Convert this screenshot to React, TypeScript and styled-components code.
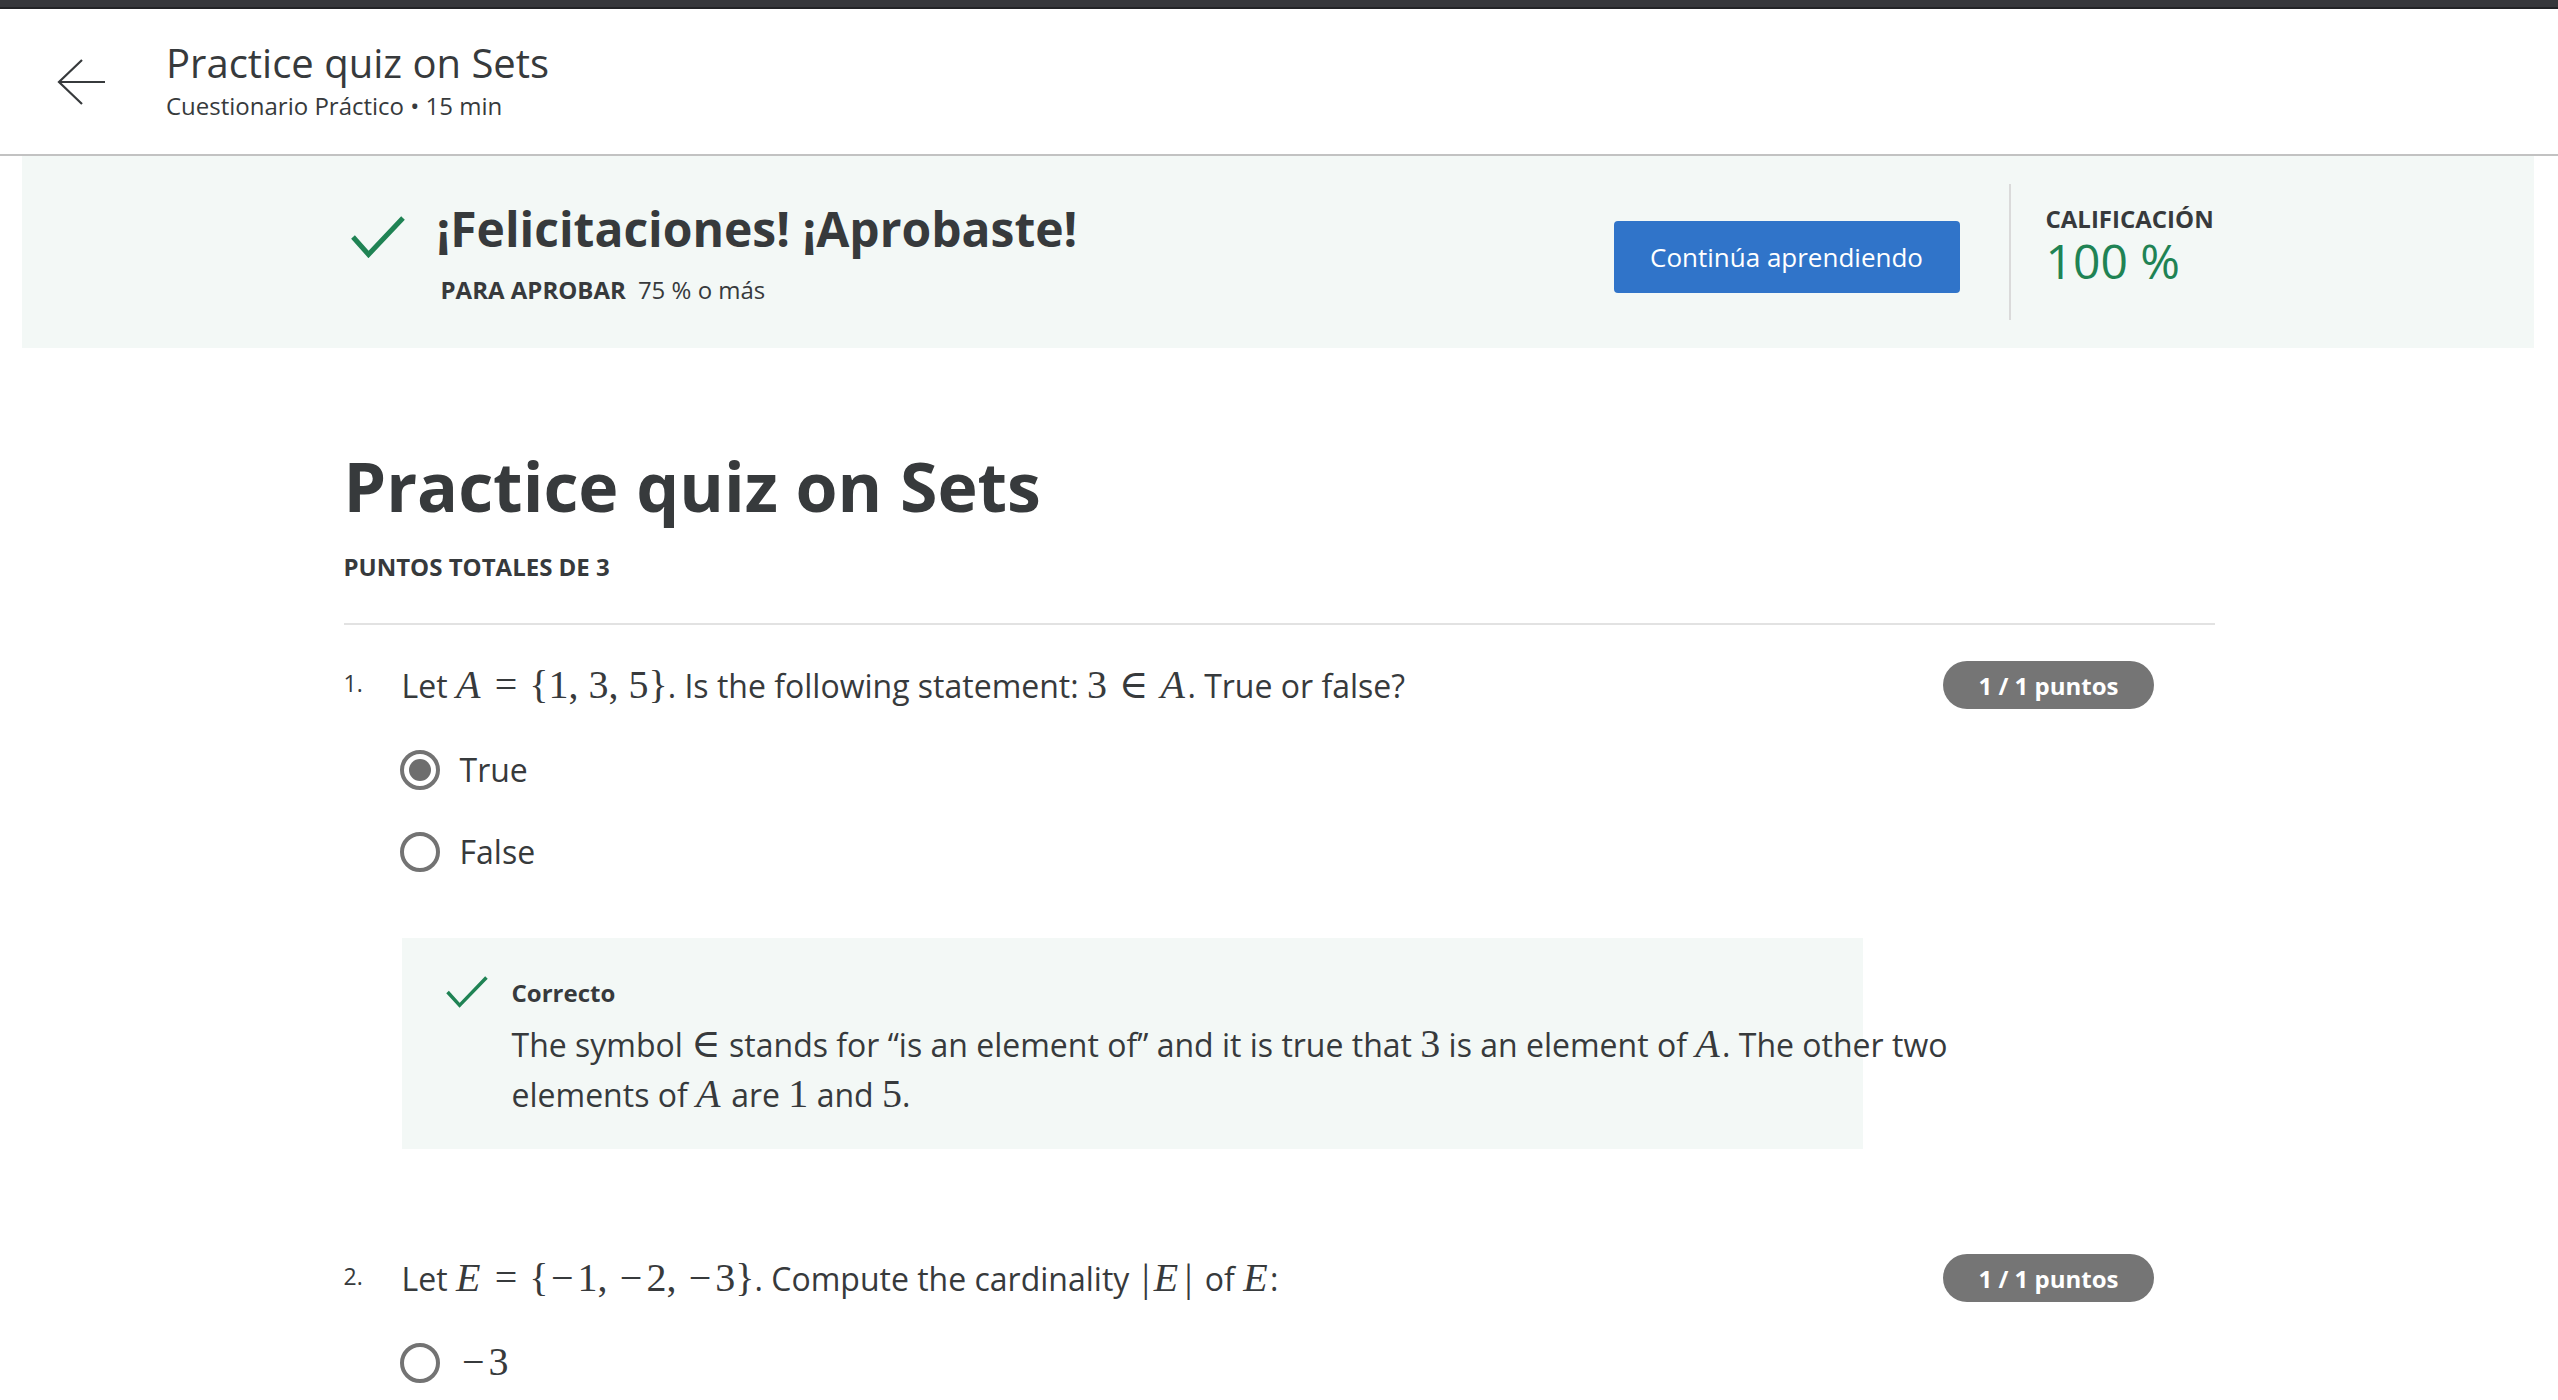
import React from "react";
import styled, { createGlobalStyle } from "styled-components";

const GlobalStyle = createGlobalStyle`
  * { box-sizing: border-box; }
  html, body {
    margin: 0;
    padding: 0;
    background: #ffffff;
    overflow: hidden;
  }
  body {
    font-family: "Open Sans", "Noto Sans", sans-serif;
    color: #373a3c;
  }
`;

const TopBar = styled.div`
  height: 9px;
  background: #36373b;
  border-bottom: 2px solid #222326;
`;

const Header = styled.header`
  height: 147px;
  display: flex;
  align-items: center;
  padding-left: 57px;
  padding-bottom: 3px;
  border-bottom: 2px solid #c2c2c2;
  background: #fff;
`;

const BackButton = styled.button`
  width: 48px;
  height: 46px;
  padding: 0;
  margin-top: 3px;
  border: none;
  background: transparent;
  display: flex;
  align-items: center;
  justify-content: center;
  color: #373a3c;
  cursor: pointer;
`;

const HeaderText = styled.div`
  margin-left: 61px;
  display: flex;
  flex-direction: column;
`;

const HeaderTitle = styled.h1`
  margin: 0;
  font-size: 40px;
  font-weight: 400;
  line-height: 48px;
  color: #373a3c;
`;

const HeaderSub = styled.div`
  margin-top: 4px;
  font-size: 24px;
  line-height: 30px;
  color: #373a3c;
`;

const Banner = styled.section`
  height: 192px;
  margin: 0 24px 0 22px;
  background: #f3f8f6;
`;

const BannerInner = styled.div`
  width: 1871px;
  height: 100%;
  margin: 0 auto;
  padding-left: 8px;
  display: flex;
  align-items: center;
`;

const PassBlock = styled.div`
  flex: 1;
  display: flex;
  align-items: flex-start;
  margin-top: 1px;
`;

const BigCheck = styled.div`
  width: 54px;
  height: 42px;
  margin-top: 15px;
  flex-shrink: 0;
  color: #1f8354;
`;

const PassText = styled.div`
  margin-left: 32px;
`;

const BannerTitle = styled.h2`
  margin: 3px 0 0;
  font-size: 48px;
  font-weight: 700;
  line-height: 50px;
  color: #373a3c;
`;

const PassLine = styled.div`
  margin: 21px 0 0 4px;
  font-size: 24px;
  line-height: 30px;
  display: flex;
  gap: 12px;
`;

const PassLabel = styled.span`
  font-weight: 700;
  text-transform: uppercase;
`;

const PrimaryButton = styled.button`
  width: 346px;
  height: 72px;
  margin-top: 10px;
  border: none;
  border-radius: 4px;
  background: #3074c9;
  color: #ffffff;
  font-family: inherit;
  font-size: 26px;
  font-weight: 400;
  cursor: pointer;
  flex-shrink: 0;
`;

const VDivider = styled.div`
  width: 2px;
  height: 136px;
  background: #dadada;
  margin: 0 35px 0 49px;
  flex-shrink: 0;
`;

const Grade = styled.div`
  width: 168px;
  margin-bottom: 10px;
  flex-shrink: 0;
`;

const GradeLabel = styled.div`
  font-size: 24px;
  font-weight: 700;
  line-height: 28px;
  white-space: nowrap;
`;

const GradeValue = styled.div`
  font-size: 48px;
  line-height: 56px;
  color: #1f8354;
  white-space: nowrap;
`;

const Main = styled.main`
  width: 1871px;
  margin: 97px auto 0;
`;

const QuizTitle = styled.h1`
  margin: 0;
  font-size: 68px;
  font-weight: 700;
  line-height: 82px;
  color: #373a3c;
`;

const TotalPoints = styled.div`
  margin-top: 24px;
  font-size: 24px;
  font-weight: 700;
  line-height: 32px;
`;

const Rule = styled.hr`
  margin: 40px 0 0;
  height: 2px;
  border: none;
  background: #e2e2e2;
`;

const QuestionList = styled.div`
  display: flex;
  flex-direction: column;
  gap: 69px;
`;

const Question = styled.div`
  padding-top: 36px;
`;

const QHead = styled.div`
  display: flex;
  align-items: flex-start;
`;

const QNumber = styled.div`
  width: 58px;
  flex-shrink: 0;
  font-size: 23px;
  line-height: 44px;
`;

const QPrompt = styled.div`
  flex: 1;
  font-size: 32px;
  line-height: 50px;
`;

const Badge = styled.span`
  height: 48px;
  padding: 0 35px;
  margin-right: 61px;
  border-radius: 24px;
  background: #757575;
  color: #ffffff;
  font-size: 24px;
  font-weight: 700;
  display: inline-flex;
  align-items: center;
  white-space: nowrap;
  flex-shrink: 0;
`;

const QBody = styled.div`
  margin-left: 58px;
`;

const Options = styled.div`
  margin-top: 34px;
  display: flex;
  flex-direction: column;
  gap: 32px;
`;

const Option = styled.label`
  height: 50px;
  display: flex;
  align-items: center;
  gap: 20px;
  margin-left: -2px;
`;

const Radio = styled.span<{ $checked?: boolean }>`
  width: 40px;
  height: 40px;
  border-radius: 50%;
  border: 4px solid #737373;
  display: flex;
  align-items: center;
  justify-content: center;
  flex-shrink: 0;
  background: #fff;

  &::after {
    content: "";
    width: 22px;
    height: 22px;
    border-radius: 50%;
    background: #6e6e6e;
    display: ${(p) => (p.$checked ? "block" : "none")};
  }
`;

const OptionLabel = styled.span`
  font-size: 32px;
  line-height: 50px;
`;

const Feedback = styled.div`
  margin-top: 61px;
  width: 1461px;
  padding: 38px 0 29px 44px;
  background: #f3f8f6;
  display: flex;
  align-items: flex-start;
  gap: 24px;
`;

const SmallCheck = styled.div`
  width: 42px;
  height: 32px;
  flex-shrink: 0;
  color: #1f8354;
`;

const FeedbackBody = styled.div`
  display: flex;
  flex-direction: column;
`;

const FeedbackTitle = styled.div`
  font-size: 24px;
  font-weight: 700;
  line-height: 34px;
`;

const Explanation = styled.p`
  margin: 10px 0 0;
  width: 1500px;
  font-size: 32px;
  line-height: 50px;
`;

/* Math (KaTeX-like) */
const M = styled.span`
  font-family: "Liberation Serif", "DejaVu Serif", serif;
  font-size: 1.25em;
  line-height: 1;
  white-space: nowrap;
`;

const MI = styled.span`
  font-style: italic;
  padding-right: 0.06em;
`;

const MO = styled.span`
  margin: 0 0.3em;
`;

const MMinus = styled.span`
  display: inline-block;
  padding: 0 0.1em 0 0.06em;
`;

const MBar = styled.span`
  margin: 0 0.1em;
`;

const ArrowIcon = () => (
  <svg width="48" height="46" viewBox="0 0 48 46" fill="none" stroke="currentColor" strokeWidth="2.2">
    <path d="M48 23 H2" />
    <path d="M25 1 L2 23 L25 45" />
  </svg>
);

const CheckIcon = ({ w, h, sw }: { w: number; h: number; sw: number }) => (
  <svg width={w} height={h} viewBox="0 0 54 42" fill="none" stroke="currentColor" strokeWidth={sw} preserveAspectRatio="none">
    <path d="M2 21 L17.5 38.5 L52 2" />
  </svg>
);

export default function App() {
  return (
    <>
      <GlobalStyle />
      <TopBar />
      <Header>
        <BackButton aria-label="Volver">
          <ArrowIcon />
        </BackButton>
        <HeaderText>
          <HeaderTitle>Practice quiz on Sets</HeaderTitle>
          <HeaderSub>Cuestionario Práctico • 15 min</HeaderSub>
        </HeaderText>
      </Header>

      <Banner>
        <BannerInner>
          <PassBlock>
            <BigCheck>
              <CheckIcon w={54} h={42} sw={5} />
            </BigCheck>
            <PassText>
              <BannerTitle>¡Felicitaciones! ¡Aprobaste!</BannerTitle>
              <PassLine>
                <PassLabel>Para aprobar</PassLabel>
                <span>75 % o más</span>
              </PassLine>
            </PassText>
          </PassBlock>
          <PrimaryButton>Continúa aprendiendo</PrimaryButton>
          <VDivider />
          <Grade>
            <GradeLabel>CALIFICACIÓN</GradeLabel>
            <GradeValue>100 %</GradeValue>
          </Grade>
        </BannerInner>
      </Banner>

      <Main>
        <QuizTitle>Practice quiz on Sets</QuizTitle>
        <TotalPoints>PUNTOS TOTALES DE 3</TotalPoints>
        <Rule />
        <QuestionList>
          <Question>
            <QHead>
              <QNumber>1.</QNumber>
              <QPrompt>
                Let{" "}
                <M>
                  <MI>A</MI>
                  <MO>=</MO>
                  {"{1, 3, 5}"}
                </M>
                . Is the following statement:{" "}
                <M>
                  3<MO>∈</MO>
                  <MI>A</MI>
                </M>
                . True or false?
              </QPrompt>
              <Badge>1 / 1 puntos</Badge>
            </QHead>
            <QBody>
              <Options>
                <Option>
                  <Radio $checked />
                  <OptionLabel>True</OptionLabel>
                </Option>
                <Option>
                  <Radio />
                  <OptionLabel>False</OptionLabel>
                </Option>
              </Options>
              <Feedback>
                <SmallCheck>
                  <CheckIcon w={42} h={32} sw={4.5} />
                </SmallCheck>
                <FeedbackBody>
                  <FeedbackTitle>Correcto</FeedbackTitle>
                  <Explanation>
                    The symbol <M>∈</M> stands for “is an element of” and it is true that <M>3</M> is an element of{" "}
                    <M>
                      <MI>A</MI>
                    </M>
                    . The other two elements of{" "}
                    <M>
                      <MI>A</MI>
                    </M>{" "}
                    are <M>1</M> and <M>5</M>.
                  </Explanation>
                </FeedbackBody>
              </Feedback>
            </QBody>
          </Question>

          <Question>
            <QHead>
              <QNumber>2.</QNumber>
              <QPrompt>
                Let{" "}
                <M>
                  <MI>E</MI>
                  <MO>=</MO>
                  {"{"}
                  <MMinus>−</MMinus>1, <MMinus>−</MMinus>2, <MMinus>−</MMinus>3{"}"}
                </M>
                . Compute the cardinality{" "}
                <M>
                  <MBar>|</MBar>
                  <MI>E</MI>
                  <MBar>|</MBar>
                </M>{" "}
                of{" "}
                <M>
                  <MI>E</MI>
                </M>
                :
              </QPrompt>
              <Badge>1 / 1 puntos</Badge>
            </QHead>
            <QBody>
              <Options>
                <Option>
                  <Radio />
                  <OptionLabel>
                    <M>
                      <MMinus>−</MMinus>3
                    </M>
                  </OptionLabel>
                </Option>
              </Options>
            </QBody>
          </Question>
        </QuestionList>
      </Main>
    </>
  );
}
